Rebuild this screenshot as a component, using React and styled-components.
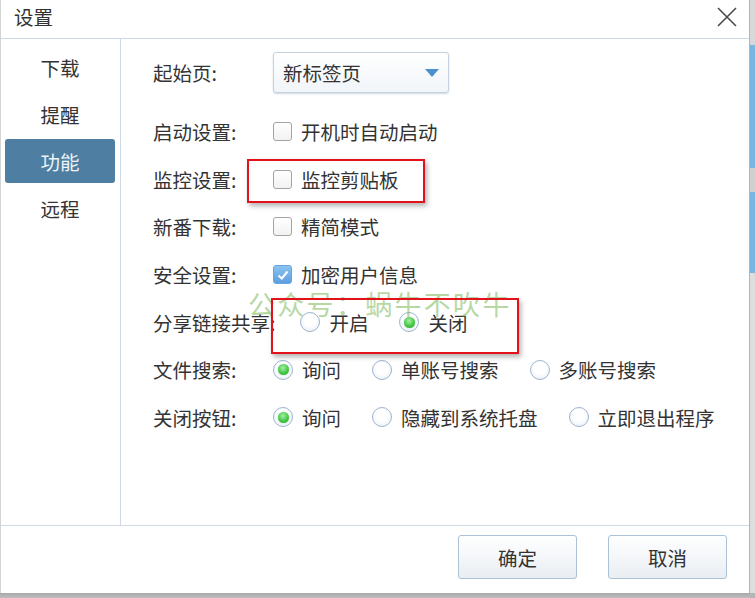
import React, { useState } from "react";
import styled, { createGlobalStyle } from "styled-components";

const GlobalStyle = createGlobalStyle`
  html, body {
    margin: 0;
    padding: 0;
    overflow: hidden;
    background: #ffffff;
  }
  * {
    box-sizing: border-box;
  }
`;

const FONT = `"Noto Sans CJK SC", "Noto Sans", sans-serif`;

function SettingsDialog() {
  const menuList = ["下载", "提醒", "功能", "远程"];
  const [activeMenu, setActiveMenu] = useState(2);

  const checkRows = [
    { label: "启动设置:", text: "开机时自动启动", checked: false },
    { label: "监控设置:", text: "监控剪贴板", checked: false },
    { label: "新番下载:", text: "精简模式", checked: false },
    { label: "安全设置:", text: "加密用户信息", checked: true },
  ];

  const radioRows = [
    { label: "分享链接共享:", options: ["开启", "关闭"], selected: 1 },
    { label: "文件搜索:", options: ["询问", "单账号搜索", "多账号搜索"], selected: 0 },
    { label: "关闭按钮:", options: ["询问", "隐藏到系统托盘", "立即退出程序"], selected: 0 },
  ];

  return (
    <Screen>
      <Dialog>
        <TitleBar>
          <Title>设置</Title>
          <CloseButton>
            <svg width="20" height="20" viewBox="0 0 20 20">
              <path d="M1 1 L19 19 M19 1 L1 19" stroke="#4a4a4a" strokeWidth="1.6" fill="none" />
            </svg>
          </CloseButton>
        </TitleBar>

        <Body>
          <Sidebar>
            {menuList.map((item, idx) => (
              <MenuItem key={item} $active={idx === activeMenu} onClick={() => setActiveMenu(idx)}>
                {item}
              </MenuItem>
            ))}
          </Sidebar>

          <Content>
            <SelectRow>
              <Label>起始页:</Label>
              <Select>
                新标签页
                <svg width="14" height="8" viewBox="0 0 14 8">
                  <polygon points="0,0 14,0 7,8" fill="#4b8fcf" />
                </svg>
              </Select>
            </SelectRow>

            {checkRows.map((row) => (
              <Row key={row.label}>
                <Label>{row.label}</Label>
                <Option>
                  <CheckBox $checked={row.checked}>
                    {row.checked && (
                      <svg width="14" height="14" viewBox="0 0 14 14">
                        <polyline points="2.5,7.5 5.8,10.5 11.5,3.5" stroke="#fff" strokeWidth="2" fill="none" />
                      </svg>
                    )}
                  </CheckBox>
                  {row.text}
                </Option>
              </Row>
            ))}

            {radioRows.map((row) => (
              <Row key={row.label}>
                <Label>{row.label}</Label>
                <Options>
                  {row.options.map((opt, i) => (
                    <Option key={opt}>
                      <Radio $checked={i === row.selected} />
                      {opt}
                    </Option>
                  ))}
                </Options>
              </Row>
            ))}

            <Watermark>公众号：蜗牛不吹牛</Watermark>
            <Highlight $left={126} $top={120} $width={178} $height={44} />
            <Highlight $left={150} $top={259} $width={248} $height={56} />
          </Content>
        </Body>

        <Footer>
          <Button>确定</Button>
          <Button>取消</Button>
        </Footer>
      </Dialog>
      <BackStrip />
    </Screen>
  );
}

export default function App() {
  return (
    <>
      <GlobalStyle />
      <SettingsDialog />
    </>
  );
}

const Screen = styled.div`
  width: 755px;
  height: 598px;
  display: flex;
  background: linear-gradient(to bottom, #ffffff 0, #ffffff 592px, #a9a9a9 593px, #bdbdbd 598px);
  font-family: ${FONT};
  color: #333333;
`;

const Dialog = styled.div`
  width: 750px;
  height: 593px;
  display: flex;
  flex-direction: column;
  background: #ffffff;
  border-left: 1px solid #d4d4d4;
  border-right: 1px solid #b4b4b4;
`;

const BackStrip = styled.div`
  width: 5px;
  height: 598px;
  background: linear-gradient(
    to bottom,
    #d8d8d8 0,
    #d8d8d8 45px,
    #7ab4e0 45px,
    #7ab4e0 168px,
    #cfcfcf 168px,
    #cfcfcf 192px,
    #7ab4e0 192px,
    #7ab4e0 273px,
    #dedede 273px,
    #dedede 593px,
    #b5b5b5 593px
  );
`;

const TitleBar = styled.div`
  height: 39px;
  flex: 0 0 39px;
  display: flex;
  align-items: center;
  justify-content: space-between;
  padding: 0 12px 0 13px;
  border-bottom: 1px solid #c9d9e9;
`;

const Title = styled.span`
  font-size: 19.5px;
  color: #333333;
  margin-top: -5px;
`;

const CloseButton = styled.span`
  display: flex;
  width: 20px;
  height: 20px;
  margin-top: -4px;
`;

const Body = styled.div`
  flex: 1;
  display: flex;
  min-height: 0;
`;

const Sidebar = styled.div`
  width: 120px;
  flex: 0 0 120px;
  border-right: 1px solid #cfdbe6;
  padding: 6px 4px 0;
  display: flex;
  flex-direction: column;
  gap: 3px;
`;

const MenuItem = styled.div`
  height: 44px;
  width: 110px;
  display: flex;
  align-items: center;
  justify-content: center;
  border-radius: 3px;
  font-size: 19.5px;
  cursor: pointer;
  color: ${(p) => (p.$active ? "#eef3f7" : "#333333")};
  background: ${(p) => (p.$active ? "#4e7fa2" : "transparent")};
`;

const Content = styled.div`
  position: relative;
  flex: 1;
  padding: 13px 0 0 32px;
  display: flex;
  flex-direction: column;
`;

const Row = styled.div`
  height: 47.6px;
  flex: 0 0 47.6px;
  display: flex;
  align-items: center;
  font-size: 19.5px;
`;

const SelectRow = styled(Row)`
  height: 41px;
  flex: 0 0 41px;
  margin-bottom: 15px;
`;

const Label = styled.span`
  min-width: 95px;
  margin-right: 25px;
  white-space: nowrap;
  color: #333333;
`;

const Select = styled.div`
  width: 176px;
  height: 41px;
  display: flex;
  align-items: center;
  justify-content: space-between;
  padding: 0 9px 0 9px;
  border: 1px solid #c3d2e0;
  border-radius: 3px;
  background: linear-gradient(to bottom, #ffffff, #f1f5f9);
  box-shadow: 0 1px 2px rgba(120, 140, 160, 0.35);
  font-size: 19.5px;
`;

const Options = styled.div`
  display: flex;
  align-items: center;
  gap: 31px;
`;

const Option = styled.label`
  display: flex;
  align-items: center;
  gap: 9px;
  white-space: nowrap;
`;

const CheckBox = styled.span`
  width: 19px;
  height: 19px;
  display: flex;
  align-items: center;
  justify-content: center;
  border-radius: 3px;
  border: 1.5px solid ${(p) => (p.$checked ? "#62a6e3" : "#a3a3a3")};
  background: ${(p) =>
    p.$checked ? "linear-gradient(to bottom, #8ac3f0, #5d9fe0)" : "linear-gradient(to bottom, #ffffff, #f2f2f2)"};
`;

const Radio = styled.span`
  width: 20px;
  height: 20px;
  border-radius: 50%;
  border: 1px solid #9fb5cf;
  display: flex;
  align-items: center;
  justify-content: center;
  background: radial-gradient(circle at 50% 40%, #ffffff 40%, #e3ebf4 100%);

  &::after {
    content: "";
    display: ${(p) => (p.$checked ? "block" : "none")};
    width: 11px;
    height: 11px;
    border-radius: 50%;
    background: radial-gradient(circle at 45% 35%, #a6f0a6 0%, #43c943 55%, #23a323 100%);
    box-shadow: 0 0 1px rgba(20, 120, 20, 0.6);
  }
`;

const Watermark = styled.span`
  position: absolute;
  left: 127px;
  top: 249px;
  font-size: 27px;
  line-height: 32px;
  letter-spacing: 2.3px;
  color: rgba(112, 178, 72, 0.5);
  white-space: nowrap;
  pointer-events: none;
`;

const Highlight = styled.div`
  position: absolute;
  left: ${(p) => p.$left}px;
  top: ${(p) => p.$top}px;
  width: ${(p) => p.$width}px;
  height: ${(p) => p.$height}px;
  border: 2px solid #e3121a;
  box-shadow: 2px 3px 5px rgba(0, 0, 0, 0.3);
  pointer-events: none;
`;

const Footer = styled.div`
  height: 68px;
  flex: 0 0 68px;
  border-top: 1px solid #cfdbe6;
  display: flex;
  justify-content: flex-end;
  align-items: flex-start;
  gap: 31px;
  padding: 9px 22px 0 0;
`;

const Button = styled.button`
  width: 119px;
  height: 44px;
  border: 1px solid #abc1d6;
  border-radius: 3px;
  background: linear-gradient(to bottom, #ffffff, #e9eef3);
  font-family: ${FONT};
  font-size: 19.5px;
  color: #333333;
  cursor: pointer;
`;
